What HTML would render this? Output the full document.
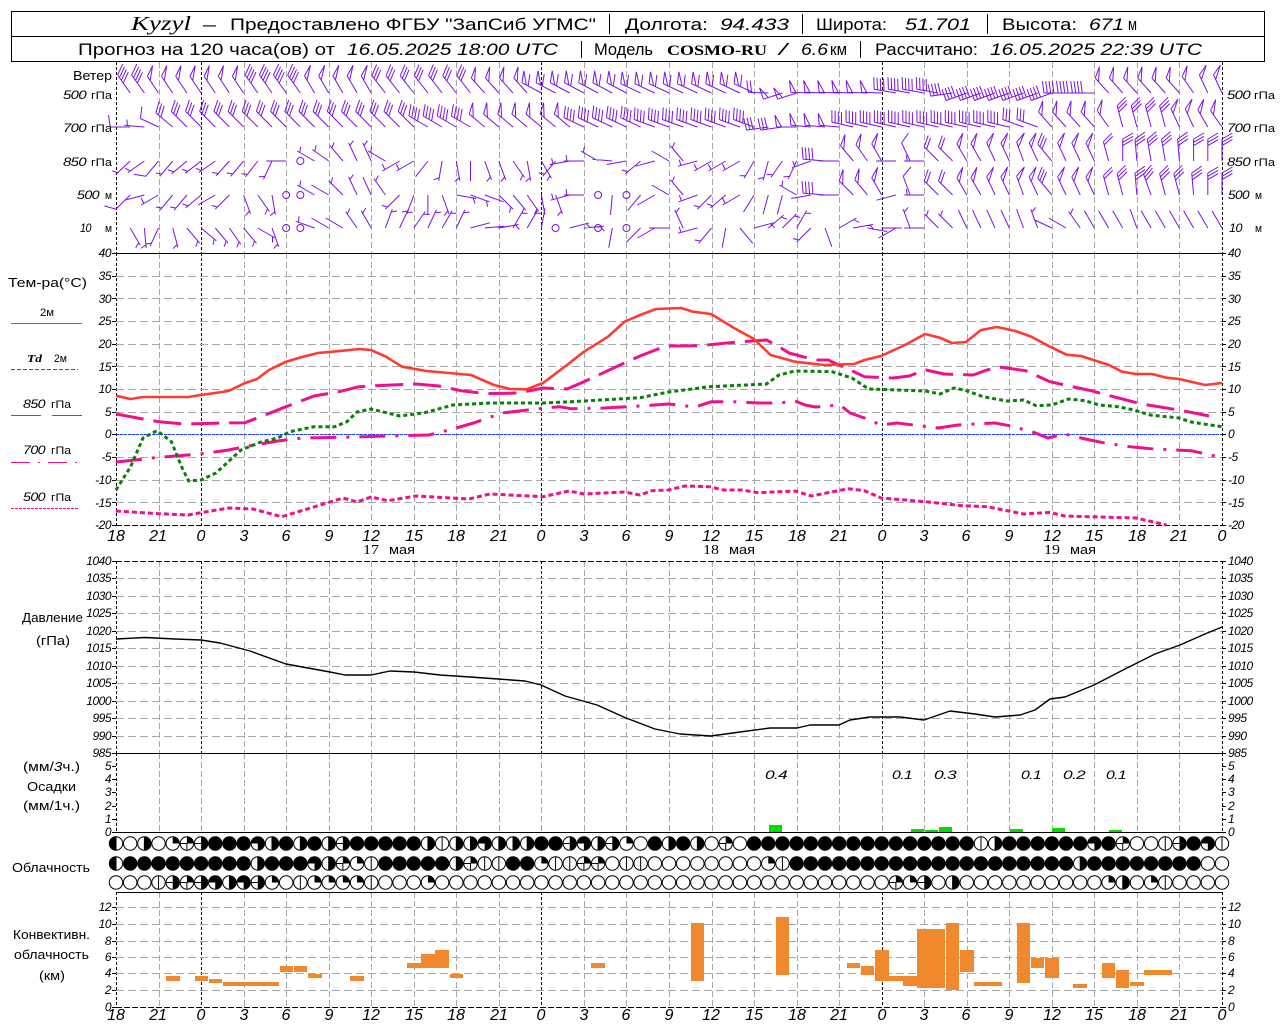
<!DOCTYPE html>
<html lang="ru"><head><meta charset="utf-8"><title>Kyzyl</title>
<style>
html,body{margin:0;padding:0;background:#fff;width:1280px;height:1024px;overflow:hidden}
svg{display:block}
text{font-family:"Liberation Sans",sans-serif;fill:#000}
.i{font-style:italic}
.t1{font-size:17px}
.n{font-size:12px;font-style:italic;letter-spacing:-.5px}
.e{text-anchor:end}
.m{font-size:16px;font-style:italic;text-anchor:middle}
.l{font-size:13px}
.w{font-size:11px}
</style></head><body>
<svg id="s" xmlns="http://www.w3.org/2000/svg" width="1280" height="1024" viewBox="0 0 1280 1024">
<rect width="1280" height="1024" fill="#fff"/>
<g id="grid"></g>
<g id="bars" shape-rendering="crispEdges">
<g fill="#00dd00"><rect x="769" y="825" width="13" height="7"/><rect x="911" y="829" width="13" height="3"/><rect x="925" y="830" width="13" height="2"/><rect x="939" y="827" width="13" height="5"/><rect x="1010" y="829" width="13" height="3"/><rect x="1052" y="828" width="13" height="4"/><rect x="1109" y="830" width="13" height="2"/></g>
<g fill="#f0882e">
<rect x="166" y="976" width="14" height="5"/><rect x="195" y="976" width="13" height="5"/><rect x="209" y="979" width="13" height="4"/><rect x="223" y="982" width="56" height="4"/><rect x="280" y="966" width="13" height="6"/><rect x="294" y="966" width="13" height="6"/><rect x="308" y="974" width="14" height="4"/><rect x="350" y="976" width="14" height="5"/><rect x="407" y="963" width="14" height="5"/><rect x="421" y="954" width="14" height="14"/><rect x="435" y="950" width="14" height="18"/><rect x="450" y="974" width="13" height="4"/><rect x="591" y="963" width="14" height="5"/>
<rect x="691" y="923" width="13" height="58"/><rect x="776" y="917" width="13" height="58"/><rect x="847" y="963" width="13" height="5"/><rect x="861" y="966" width="13" height="9"/><rect x="875" y="950" width="14" height="31"/><rect x="889" y="976" width="14" height="5"/><rect x="903" y="976" width="15" height="10"/><rect x="917" y="929" width="28" height="59"/><rect x="946" y="923" width="13" height="67"/><rect x="960" y="950" width="14" height="22"/><rect x="974" y="982" width="28" height="4"/><rect x="1017" y="923" width="13" height="60"/><rect x="1031" y="958" width="13" height="10"/><rect x="1045" y="958" width="14" height="20"/><rect x="1073" y="984" width="14" height="4"/><rect x="1102" y="963" width="13" height="15"/><rect x="1116" y="970" width="13" height="18"/><rect x="1130" y="982" width="14" height="4"/><rect x="1144" y="970" width="28" height="5"/>
</g></g>
<g id="curves" fill="none" stroke-linejoin="round">
<line x1="116" y1="434.5" x2="1222" y2="434.5" stroke="#2040ff" stroke-width="1" stroke-dasharray="3 1"/>
<polyline stroke="#f0108c" stroke-width="3" stroke-dasharray="5 3" points="116,511 159,513.7 188,515 201,512.7 228.6,508 253,509 281.6,516.7 314,507 343,498 357,502 371,497 388,500.7 416,496 469,499 490,494 543,496.7 569,491 584,494 624.5,492 640,495 652,490.7 668.6,490 685,486 709.4,486.7 723.7,490 742,490 758,492.7 795,491 811.4,496 848,488.7 864.5,490.7 881,498 925.7,501.7 962,505.7 987,506.7 1023.7,514 1050,512.4 1064.5,516 1136,518 1166.5,525"/>
<polyline stroke="#f0108c" stroke-width="3" stroke-dasharray="26 10 3 10" points="116,462 135,460 155,457.7 200,454 228.6,450 245,446.7 277.6,441 302,438 355,437 388,436 428.6,435 449,430 473.5,423 502,413 539,408.7 559,406.7 571,408.7 604,408 640,406 668.6,404 695,407 711.4,401.7 732,401.7 758,403 779,403 795,401 805,405 815.5,407 840,405 850,413 864.5,418 881,425 897,423 921.6,426 938,428 958,425 974.7,424 995,423 1011,426 1032,431.7 1048,438 1064.5,434 1081,438 1103,442.7 1130,446.7 1154,449 1191,450.7 1211,455 1222,458"/>
<polyline stroke="#f0108c" stroke-width="3" stroke-dasharray="28 10" points="116,414 143,419 159,421.7 184,424 224.5,423 245,422.7 265,415 286,406.7 314,396 339,391.7 359,386.7 375.5,385.7 416,384 439,386 461,390.7 486,393.7 518,393 543,388 567,389 584,381.7 620,365 640,356 658,349 670.6,346 699,345.7 738,342 766.5,340 779,346.7 789,353 815.5,360 828,360 854,371.7 864.5,376.7 893,378 909,376 926,370 944,374 973,375 987,370 999,367 1013.5,369 1025.7,370.7 1050,381.7 1064.5,385 1091,390.7 1103,394 1130,401 1142,404 1170.6,408.7 1183,410.7 1209,416"/>
<polyline stroke="#0a7f0a" stroke-width="3" stroke-dasharray="4 3" points="116,490 130.6,466.7 143,438 157,430.7 171.4,441.7 181.6,466.7 188.6,481 201,480 216,473 241,450 261,442 277.6,438 290,431.7 314,426.7 334.7,426.7 347,421.7 357,412 371,409 400,416 424.5,412.7 453,405 490,403 543,403 571.4,401.7 640,397.7 668.6,392 709.4,386.7 766.5,384 779,375 795,371 832,371.7 852,378 868.6,389 925.7,391 940,394 954,388 966.5,390.7 983,396.7 1007,401 1023.7,400 1036,405.7 1052,405 1068.6,399 1085,400.7 1099,405 1117.6,406.7 1134,410 1150,415 1179,418 1191,422 1222,426.7"/>
<polyline stroke="#ff3b30" stroke-width="2.6" points="116,395.7 130.6,399 143,397 188,397 201,395 228.6,391 245,383 257,379 269,370 286,361.7 302,357 318,353 343,350.7 359,349 371,350 386,356.7 402,366.7 426.5,371 449,373 471,375 494,385 510,389 526.5,389.3 543,383 567,365 584,351.7 608,336.7 624.5,321.7 640,315 656,309 681,308 693,311.7 711,314 734,328 754,339 770.6,355 795,361.7 824,365 854,364 864.5,360 881,356 905,345 925,334 940,337.7 952,343 966,342 981,330 997,327 1015.5,331 1032,337 1048,345.7 1066.5,354.7 1081,356 1109,365 1122,371.7 1136,374 1152,374 1166.5,377.7 1179,379 1205,385 1222,383"/>
<polyline stroke="#000" stroke-width="1.4" points="116,639 145,637.5 175,639 201,640 220,643 250,651 286,664 330,672 345,675 371,675 390,671 414,672 440,675 470,677 498,679 525,681 541,685 565,696 597,705 626,718 655,729 680,734 711,736 740,732 770,728 797,728 810,725 839,725 850,720 870,717 900,717 924,720 950,711 975,714 995,717 1020,715 1035,710 1050,699 1065,697 1094,685 1125,669 1155,654 1180,645 1205,634 1222,627"/>
</g>
<g id="barbs" fill="none" stroke="#7a12e6" stroke-width="1"></g>
<g id="clouds"></g>
<g id="box" fill="none" stroke="#000" stroke-width="1" shape-rendering="crispEdges">
<rect x="11.5" y="11.5" width="1253" height="50"/><line x1="11" y1="36.5" x2="1265" y2="36.5"/>
<line x1="609.5" y1="14" x2="609.5" y2="34"/><line x1="802.5" y1="14" x2="802.5" y2="34"/><line x1="987.5" y1="14" x2="987.5" y2="34"/>
<line x1="581.5" y1="41" x2="581.5" y2="58"/><line x1="860.5" y1="41" x2="860.5" y2="58"/>
</g>
<g shape-rendering="crispEdges" fill="none">
<line x1="11" y1="323.5" x2="82" y2="323.5" stroke="#ff3b30"/>
<line x1="11" y1="369.5" x2="78" y2="369.5" stroke="#0a7f0a" stroke-dasharray="4 2"/>
<line x1="11" y1="415.5" x2="82" y2="415.5" stroke="#f0108c" stroke-dasharray="30 11"/>
<line x1="11" y1="462.5" x2="78" y2="462.5" stroke="#f0108c" stroke-dasharray="19 8 2 8"/>
<line x1="11" y1="508.5" x2="78" y2="508.5" stroke="#f0108c" stroke-dasharray="3 1"/>
</g>
<!-- header -->
<text x="131" y="30" font-size="20" class="i" style="font-family:'Liberation Serif',serif" textLength="60">Kyzyl</text>
<text x="203" y="30" class="t1" textLength="13">—</text>
<text x="230" y="30" class="t1" textLength="366">Предоставлено ФГБУ "ЗапСиб УГМС"</text>
<text x="625" y="30" class="t1" textLength="83">Долгота:</text>
<text x="720" y="30" class="t1 i" textLength="69">94.433</text>
<text x="816" y="30" class="t1" textLength="71">Широта:</text>
<text x="905" y="30" class="t1 i" textLength="66">51.701</text>
<text x="1002" y="30" class="t1" textLength="75">Высота:</text>
<text x="1089" y="30" class="t1 i" textLength="35">671</text>
<text x="1128" y="30" class="t1" textLength="9">м</text>
<text x="78" y="55" class="t1" textLength="257">Прогноз на 120 часа(ов) от</text>
<text x="347" y="55" class="t1 i" textLength="211">16.05.2025 18:00 UTC</text>
<text x="594" y="55" class="t1" textLength="59">Модель</text>
<text x="667" y="55" font-size="15" font-weight="bold" style="font-family:'Liberation Serif',serif" textLength="100">COSMO-RU</text>
<text x="779" y="55" class="t1 i" textLength="8">/</text>
<text x="801" y="55" class="t1 i" textLength="27">6.6</text>
<text x="830" y="55" class="t1" textLength="17">км</text>
<text x="875" y="55" class="t1" textLength="103">Рассчитано:</text>
<text x="990" y="55" class="t1 i" textLength="212">16.05.2025 22:39 UTC</text>
<!-- wind labels -->
<text x="73" y="80" class="l" textLength="39">Ветер</text>
<g>
<text x="63" y="99" class="n" textLength="23">500</text><text x="91" y="99" class="w" textLength="21">гПа</text>
<text x="63" y="132" class="n" textLength="23">700</text><text x="91" y="132" class="w" textLength="21">гПа</text>
<text x="63" y="166" class="n" textLength="23">850</text><text x="91" y="166" class="w" textLength="21">гПа</text>
<text x="77" y="199" class="n" textLength="22">500</text><text x="105" y="199" class="w" textLength="7">м</text>
<text x="80" y="232" class="n" textLength="11">10</text><text x="105" y="232" class="w" textLength="7">м</text>
<text x="1227" y="99" class="n" textLength="23">500</text><text x="1254" y="99" class="w" textLength="21">гПа</text>
<text x="1227" y="132" class="n" textLength="23">700</text><text x="1254" y="132" class="w" textLength="21">гПа</text>
<text x="1227" y="166" class="n" textLength="23">850</text><text x="1254" y="166" class="w" textLength="21">гПа</text>
<text x="1228" y="199" class="n" textLength="21">500</text><text x="1255" y="199" class="w" textLength="7">м</text>
<text x="1229" y="232" class="n" textLength="13">10</text><text x="1255" y="232" class="w" textLength="7">м</text>
</g>
<!-- left legend -->
<text x="8" y="287" class="l" textLength="79">Тем-ра(°С)</text>
<text x="40" y="316" class="w" textLength="14">2м</text>
<text x="27" y="362" class="w i" font-weight="bold" style="font-family:'Liberation Serif',serif" textLength="15">Td</text><text x="54" y="362" class="w" textLength="13">2м</text>
<text x="23" y="408" class="n" textLength="22">850</text><text x="51" y="408" class="w" textLength="20">гПа</text>
<text x="23" y="454" class="n" textLength="22">700</text><text x="51" y="454" class="w" textLength="20">гПа</text>
<text x="23" y="501" class="n" textLength="22">500</text><text x="51" y="501" class="w" textLength="20">гПа</text>
<text x="22" y="622" class="l" textLength="61">Давление</text>
<text x="36" y="645" class="l" textLength="34">(гПа)</text>
<text x="23" y="771" class="l" textLength="57">(мм/<tspan class="i">3</tspan>ч.)</text>
<text x="27" y="791" class="l" textLength="49">Осадки</text>
<text x="23" y="810" class="l" textLength="57">(мм/1ч.)</text>
<text x="12" y="872" class="l" textLength="78">Облачность</text>
<text x="13" y="939" class="l" textLength="77">Конвективн.</text>
<text x="14" y="959" class="l" textLength="75">облачность</text>
<text x="39" y="980" class="l" textLength="26">(км)</text>
<!-- ticks -->
<g>
<text x="111" y="257" class="n e">40</text><text x="111" y="280" class="n e">35</text><text x="111" y="303" class="n e">30</text><text x="111" y="325" class="n e">25</text><text x="111" y="348" class="n e">20</text><text x="111" y="371" class="n e">15</text><text x="111" y="393" class="n e">10</text><text x="111" y="416" class="n e">5</text><text x="111" y="438" class="n e">0</text><text x="111" y="461" class="n e">-5</text><text x="111" y="484" class="n e">-10</text><text x="111" y="507" class="n e">-15</text><text x="111" y="529" class="n e">-20</text>
<text x="1228" y="257" class="n">40</text><text x="1228" y="280" class="n">35</text><text x="1228" y="303" class="n">30</text><text x="1228" y="325" class="n">25</text><text x="1228" y="348" class="n">20</text><text x="1228" y="371" class="n">15</text><text x="1228" y="393" class="n">10</text><text x="1228" y="416" class="n">5</text><text x="1228" y="438" class="n">0</text><text x="1228" y="461" class="n">-5</text><text x="1228" y="484" class="n">-10</text><text x="1228" y="507" class="n">-15</text><text x="1228" y="529" class="n">-20</text>
<text x="111" y="565" class="n e">1040</text><text x="111" y="582" class="n e">1035</text><text x="111" y="600" class="n e">1030</text><text x="111" y="617" class="n e">1025</text><text x="111" y="635" class="n e">1020</text><text x="111" y="652" class="n e">1015</text><text x="111" y="670" class="n e">1010</text><text x="111" y="687" class="n e">1005</text><text x="111" y="705" class="n e">1000</text><text x="111" y="722" class="n e">995</text><text x="111" y="740" class="n e">990</text><text x="111" y="757" class="n e">985</text>
<text x="1228" y="565" class="n">1040</text><text x="1228" y="582" class="n">1035</text><text x="1228" y="600" class="n">1030</text><text x="1228" y="617" class="n">1025</text><text x="1228" y="635" class="n">1020</text><text x="1228" y="652" class="n">1015</text><text x="1228" y="670" class="n">1010</text><text x="1228" y="687" class="n">1005</text><text x="1228" y="705" class="n">1000</text><text x="1228" y="722" class="n">995</text><text x="1228" y="740" class="n">990</text><text x="1228" y="757" class="n">985</text>
<text x="111" y="770" class="n e">5</text><text x="111" y="783" class="n e">4</text><text x="111" y="796" class="n e">3</text><text x="111" y="810" class="n e">2</text><text x="111" y="823" class="n e">1</text><text x="111" y="836" class="n e">0</text>
<text x="1228" y="770" class="n">5</text><text x="1228" y="783" class="n">4</text><text x="1228" y="796" class="n">3</text><text x="1228" y="810" class="n">2</text><text x="1228" y="823" class="n">1</text><text x="1228" y="836" class="n">0</text>
<text x="111" y="911" class="n e">12</text><text x="111" y="928" class="n e">10</text><text x="111" y="945" class="n e">8</text><text x="111" y="961" class="n e">6</text><text x="111" y="977" class="n e">4</text><text x="111" y="994" class="n e">2</text><text x="111" y="1011" class="n e">0</text>
<text x="1228" y="911" class="n">12</text><text x="1228" y="928" class="n">10</text><text x="1228" y="945" class="n">8</text><text x="1228" y="961" class="n">6</text><text x="1228" y="977" class="n">4</text><text x="1228" y="994" class="n">2</text><text x="1228" y="1011" class="n">0</text>
</g>
<!-- precip values -->
<text x="765" y="779" class="n" textLength="22">0.4</text>
<text x="892" y="779" class="n" textLength="20">0.1</text>
<text x="934" y="779" class="n" textLength="22">0.3</text>
<text x="1021" y="779" class="n" textLength="20">0.1</text>
<text x="1063" y="779" class="n" textLength="22">0.2</text>
<text x="1106" y="779" class="n" textLength="20">0.1</text>
<!-- x labels temp -->
<text x="116" y="541" class="m">18</text><text x="158" y="541" class="m">21</text><text x="201" y="541" class="m">0</text><text x="244" y="541" class="m">3</text><text x="286" y="541" class="m">6</text><text x="329" y="541" class="m">9</text><text x="371" y="541" class="m">12</text><text x="414" y="541" class="m">15</text><text x="456" y="541" class="m">18</text><text x="499" y="541" class="m">21</text><text x="541" y="541" class="m">0</text><text x="584" y="541" class="m">3</text><text x="626" y="541" class="m">6</text><text x="669" y="541" class="m">9</text><text x="711" y="541" class="m">12</text><text x="754" y="541" class="m">15</text><text x="797" y="541" class="m">18</text><text x="839" y="541" class="m">21</text><text x="882" y="541" class="m">0</text><text x="924" y="541" class="m">3</text><text x="966" y="541" class="m">6</text><text x="1009" y="541" class="m">9</text><text x="1052" y="541" class="m">12</text><text x="1094" y="541" class="m">15</text><text x="1137" y="541" class="m">18</text><text x="1179" y="541" class="m">21</text><text x="1222" y="541" class="m">0</text>
<text x="363" y="554" font-size="14" style="font-family:'Liberation Serif',serif" textLength="16">17</text><text x="389" y="554" class="l" textLength="26">мая</text>
<text x="703" y="554" font-size="14" style="font-family:'Liberation Serif',serif" textLength="16">18</text><text x="729" y="554" class="l" textLength="26">мая</text>
<text x="1044" y="554" font-size="14" style="font-family:'Liberation Serif',serif" textLength="16">19</text><text x="1070" y="554" class="l" textLength="26">мая</text>
<!-- x labels bottom -->
<text x="116" y="1020" class="m">18</text><text x="158" y="1020" class="m">21</text><text x="201" y="1020" class="m">0</text><text x="244" y="1020" class="m">3</text><text x="286" y="1020" class="m">6</text><text x="329" y="1020" class="m">9</text><text x="371" y="1020" class="m">12</text><text x="414" y="1020" class="m">15</text><text x="456" y="1020" class="m">18</text><text x="499" y="1020" class="m">21</text><text x="541" y="1020" class="m">0</text><text x="584" y="1020" class="m">3</text><text x="626" y="1020" class="m">6</text><text x="669" y="1020" class="m">9</text><text x="711" y="1020" class="m">12</text><text x="754" y="1020" class="m">15</text><text x="797" y="1020" class="m">18</text><text x="839" y="1020" class="m">21</text><text x="882" y="1020" class="m">0</text><text x="924" y="1020" class="m">3</text><text x="966" y="1020" class="m">6</text><text x="1009" y="1020" class="m">9</text><text x="1052" y="1020" class="m">12</text><text x="1094" y="1020" class="m">15</text><text x="1137" y="1020" class="m">18</text><text x="1179" y="1020" class="m">21</text><text x="1222" y="1020" class="m">0</text>
</svg>
<script>
(function(){
var NS='http://www.w3.org/2000/svg';
document.querySelectorAll('text[textLength]').forEach(function(t){t.setAttribute('lengthAdjust','spacingAndGlyphs')});
function el(p,n,a){var e=document.createElementNS(NS,n);for(var k in a)e.setAttribute(k,a[k]);p.appendChild(e);return e}
function X(h){return 116+14.1795*h}
var G=document.getElementById('grid');
var g=el(G,'g',{'shape-rendering':'crispEdges',fill:'none'});
var gray='#a8a8a8';
function hl(y,x1,x2,c,d){el(g,'line',{x1:x1,x2:x2,y1:y+.5,y2:y+.5,stroke:c,'stroke-dasharray':d||'none'})}
function vl(x,y1,y2,c,d){x=Math.round(x)+.5;el(g,'line',{x1:x,x2:x,y1:y1,y2:y2,stroke:c,'stroke-dasharray':d||'none'})}
var i,panels=[[62,253],[253,525],[561,753],[753,832],[892,1007]];
panels.forEach(function(p,pi){
 for(var h=0;h<=78;h+=3){
  var day=(h-6)%24==0;
  var edge=(h==0||h==78);
  if(edge){vl(X(h),p[0],p[1],'#000','3 2');continue}
  if(day&&pi!=3){vl(X(h),p[0],p[1],'#000','3 2')}
  else vl(X(h),p[0],p[1],gray,'6 3');
 }
});
for(i=1;i<12;i++){var y=Math.round(253+i*22.67);hl(y,116,1222,gray,'8 4')}
for(i=1;i<11;i++){var y2=Math.round(561+i*17.45);hl(y2,116,1222,gray,'8 4')}
[907,924,941,957,973,990].forEach(function(v){hl(v,116,1222,gray,'8 4')});
hl(253,116,1222,'#000');hl(525,116,1222,'#000','6 2');
hl(561,116,1222,'#000','6 2');hl(753,116,1222,'#000');hl(832,116,1222,'#000');hl(892,116,1222,'#000');hl(1007,116,1222,'#000','6 2');
function ticks(a){a.forEach(function(v){hl(v,112,116,'#000');hl(v,1222,1226,'#000')})}
var tk=[];
for(i=0;i<=12;i++)tk.push(Math.round(253+i*22.67));
for(i=0;i<=11;i++)tk.push(Math.round(561+i*17.45));
tk=tk.concat([766,779,792,806,819,832,907,924,941,957,973,990,1007]);ticks(tk);

var rows=[
[93,"325:8*2 326:t*7 325:8*4 330:t*5 322:6*7 318:t*4 298:T*7 295:T*9 272:4 252:t*2 272:t*6 280:8*4 262:8 250:8*7 270:8*3 318:t*6 325:t 335:t*2"],
[127,"270:2 275:1 295:2 310:6 315:6*8 315:6*9 300:8*4 310:t*7 295:8*5 290:8*8 262:6*2 270:t 275:t*3 283:8*12 290:6*2 318:t*4 325:t 345:6*4 335:t*2 330:t 325:t"],
[161,"227:1 235:1 220:2 220:1 230:1 232:1 235:1 222:1 220:1 218:1 205:1 270:0 0:c 300:1 305:1 320:1 335:1 335:1 300:1 240:1 240:1 218:0 190:1 170:1 180:0 160:1 160:1 145:1 170:1 150:1 220:1 260:1 270:1 300:1 275:0 260:0 230:1 255:0 300:0 320:1 255:1 240:1 240:1 240:1 210:1 195:1 215:1 205:1 250:1 275:8 270:0 320:t 325:t 330:t 270:0 335:2 270:1 315:4 315:4 330:t 330:t 335:t 335:t 340:t 335:t 320:6 335:t 335:t 335:t 345:4 0:6 355:6 350:6 350:6 355:6 0:6 0:6 0:6"],
[195,"225:2 255:0 240:1 220:1 220:1 230:1 240:0 225:1 160:1 145:1 170:1 0:c 0:c 300:1 300:0 315:1 335:1 335:0 325:1 225:1 200:1 180:0 160:1 100:1 110:1 110:0 135:1 140:1 145:1 170:0 160:1 255:1 270:1 0:c 185:0 0:c 220:0 240:0 300:0 320:1 250:1 225:1 230:1 240:1 212:0 195:0 195:0 300:1 260:0 275:8 270:0 315:t 320:t 330:t 255:0 340:2 270:1 315:4 315:4 330:t 330:t 335:t 335:t 340:t 335:t 320:6 335:t 335:t 335:t 345:4 345:6 355:6 340:6 345:6 345:6 355:6 0:6 0:6"],
[228,"150:1 175:1 205:1 165:1 140:1 130:1 140:1 145:1 140:1 120:1 160:1 0:c 0:c 290:1 300:0 300:0 325:1 330:1 20:1 25:1 35:1 25:1 30:1 25:1 75:0 85:0 80:1 30:1 30:1 10:0 0:c 75:1 85:1 0:c 190:0 0:c 225:0 240:0 270:0 335:1 255:1 220:1 190:0 140:0 75:1 50:1 45:1 30:1 225:1 160:0 60:1 80:1 100:0 90:0 240:0 340:1 270:0 315:1 315:1 335:0 335:0 335:0 335:0 340:0 340:1 295:0 300:0 325:1 330:0 330:0 330:0 340:0 330:0 330:0 330:0 330:0 330:0 330:0"]];
var B=document.getElementById('barbs');
var d='';var circles=[];
function parse(s){var o=[];s.split(' ').forEach(function(t){var m=t.split('*'),n=m[1]?+m[1]:1,q=m[0].split(':');for(var k=0;k<n;k++)o.push([+q[0],q[1]])});return o}
function f(v){return v.toFixed(1)}
rows.forEach(function(r){
 var Y=r[0];
 parse(r[1]).forEach(function(b,idx){
  var h=idx+1,x=X(h),c=b[1];
  if(c=='c'){circles.push([x,Y]);return}
  var a=b[0]*Math.PI/180,ux=Math.sin(a),uy=-Math.cos(a);
  var L=20+(c=='6'||c=='8'||c=='T'?2:0);
  var tx=x+ux*L,ty=Y+uy*L;
  d+='M'+f(x)+' '+f(Y)+'L'+f(tx)+' '+f(ty);
  var off=60;
  if(b[0]>=240&&b[0]<325)off=60+(325-b[0])*0.4;
  var fa=a+off*Math.PI/180,fx=Math.sin(fa),fy=-Math.cos(fa);
  var pos=0,ft=12;
  var feather=function(len){var sx=tx-ux*pos,sy=ty-uy*pos;d+='M'+f(sx)+' '+f(sy)+'L'+f(sx+fx*len)+' '+f(sy+fy*len);pos+=3.3};
  var tri=function(){var sx=tx-ux*pos,sy=ty-uy*pos;var ex=sx-ux*5,ey=sy-uy*5;d+='M'+f(sx)+' '+f(sy)+'L'+f(sx+fx*ft)+' '+f(sy+fy*ft)+'L'+f(ex)+' '+f(ey);pos+=7};
  if(c=='t'){tri()}
  else if(c=='T'){tri();feather(ft)}
  else{var n=+c;
   if(n==1){pos=3;feather(6)}
   else{for(var j=0;j<Math.floor(n/2);j++)feather(ft);if(n%2)feather(6)}
  }
 });
});
el(B,'path',{d:d});
circles.forEach(function(c){el(B,'circle',{cx:c[0],cy:c[1],r:3.5})});

var C=document.getElementById('clouds');
function rp(c,n){return c.repeat(n)}
var cr=[
[843.5,"LOROqQHFFFWRFRFRHFFFFFRIRRWRRRFFHWRHqOFRFROQO"+rp('F',16)+"IR"+rp('F',6)+"WFQOOIHFWI"],
[863.5,"L"+rp('F',9)+"RFFFWRQqI"+rp('F',5)+"RQIIFFqIIQQOII"+rp('O',8)+"qI"+rp('F',20)+"R"+rp('F',8)+"OO"],
[882.5,"OOOIHQHWRWHqOIqqqqIOOOq"+rp('O',32)+"QqHOR"+rp('O',10)+"qROqIOOOO"]];
var R=6.7;
cr.forEach(function(r){
 var s=r[1],y=r[0];
 for(var k=0;k<s.length&&k<79;k++){
  var x=X(k),t=s[k];
  el(C,'circle',{cx:x,cy:y,r:R,fill:t=='F'?'#000':'#fff',stroke:'#000','stroke-width':1});
  var p='',ln='';
  var T=x+','+(y-R),Bt=x+','+(y+R),Lf=(x-R)+','+y,Rt=(x+R)+','+y;
  if(t=='R'||t=='H')p='M'+T+'A'+R+' '+R+' 0 0 1 '+Bt+'Z';
  if(t=='L')p='M'+T+'A'+R+' '+R+' 0 0 0 '+Bt+'Z';
  if(t=='q'||t=='Q')p='M'+x+','+y+'L'+T+'A'+R+' '+R+' 0 0 1 '+Rt+'Z';
  if(t=='W')p='M'+x+','+y+'L'+Lf+'A'+R+' '+R+' 0 1 1 '+Bt+'Z';
  if(t=='I')ln='M'+T+'L'+Bt;
  if(t=='H')ln='M'+Lf+'L'+x+','+y;
  if(t=='Q')ln='M'+x+','+y+'L'+Bt+'M'+x+','+y+'L'+Lf;
  if(t=='R'||t=='L')ln='M'+T+'L'+Bt;
  if(p)el(C,'path',{d:p,fill:'#000'});
  if(ln)el(C,'path',{d:ln,stroke:'#000',fill:'none','stroke-width':1});
 }
});
})();
</script>
</body></html>
